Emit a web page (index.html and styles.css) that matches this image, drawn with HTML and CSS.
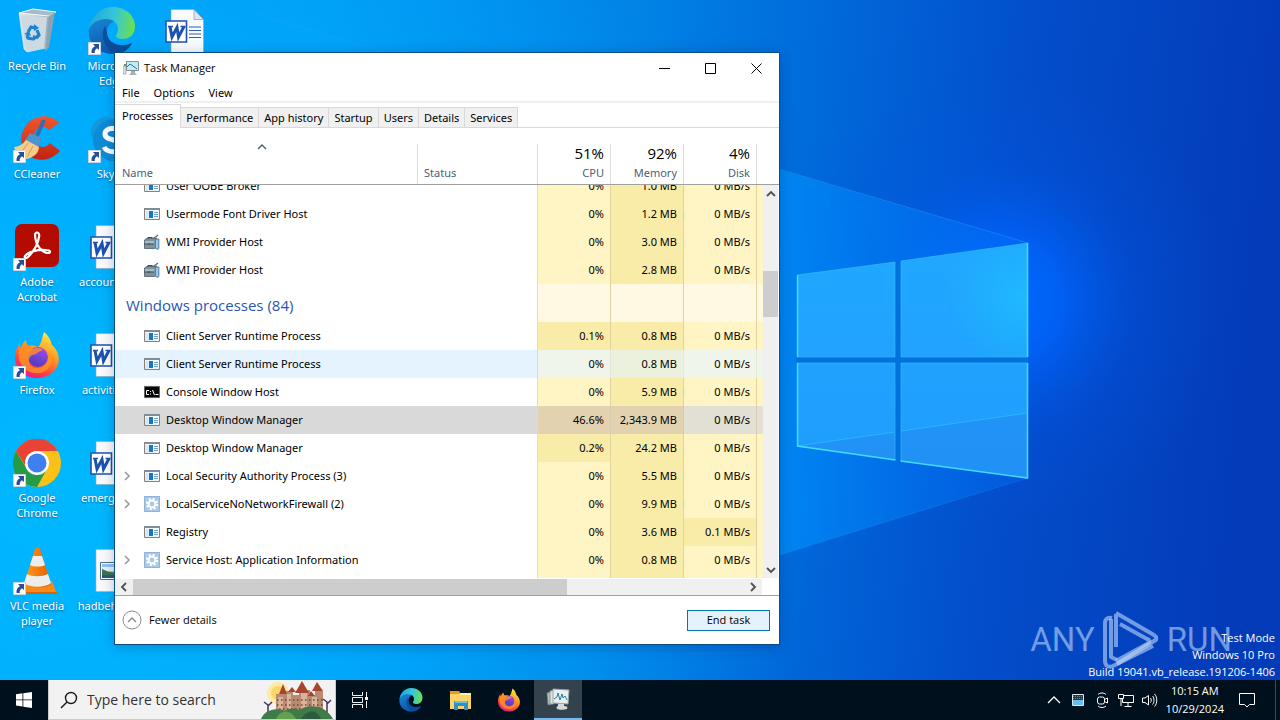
FILE: index.html
```html
<!DOCTYPE html>
<html lang="en">
<head>
<meta charset="utf-8">
<meta name="viewport" content="width=device-width, initial-scale=1">
<title>Task Manager</title>
<link rel="stylesheet" href="styles.css">
</head>
<body>
<svg class="defs" aria-hidden="true">
  <defs>
    <linearGradient id="edgeA" x1="0" y1="0.3" x2="1" y2="0.4"><stop offset="0" stop-color="#1fa7e0"/><stop offset="0.55" stop-color="#36c6d8"/><stop offset="1" stop-color="#6be04f"/></linearGradient>
    <linearGradient id="edgeB" x1="0" y1="0" x2="0.3" y2="1"><stop offset="0" stop-color="#1a94dc"/><stop offset="1" stop-color="#0c57b0"/></linearGradient>
    <linearGradient id="ffA" x1="0.8" y1="0" x2="0.3" y2="1"><stop offset="0" stop-color="#fff04a"/><stop offset="0.4" stop-color="#ffa022"/><stop offset="0.75" stop-color="#ff4340"/><stop offset="1" stop-color="#e3188a"/></linearGradient>
    <linearGradient id="ffB" x1="0.7" y1="0" x2="0.3" y2="1"><stop offset="0" stop-color="#a04bf0"/><stop offset="1" stop-color="#4a3bb8"/></linearGradient>
    <linearGradient id="ccA" x1="0" y1="0" x2="0" y2="1"><stop offset="0" stop-color="#f0562f"/><stop offset="1" stop-color="#c3230f"/></linearGradient>
    <linearGradient id="vlcA" x1="0" y1="0" x2="1" y2="0"><stop offset="0" stop-color="#ff9a1f"/><stop offset="1" stop-color="#e85e00"/></linearGradient>
    <linearGradient id="binA" x1="0" y1="0" x2="1" y2="0"><stop offset="0" stop-color="#dce6ec"/><stop offset="0.55" stop-color="#c3d2db"/><stop offset="1" stop-color="#93a7b4"/></linearGradient>
    <symbol id="i-arrow" viewBox="0 0 13 13"><path fill="#fdfdfd" stroke="#c9d6e2" d="M.5.5h12v12H.5z"/><path fill="#2a4f9a" d="M5 2h6v6L9 6.200C7 7.500 6.500 9 6.800 11H3.600C3 7.500 4.500 5.500 7 4.200z"/></symbol>
    <symbol id="i-edge" viewBox="0 0 48 48">
      <path fill="url(#edgeB)" d="M1 22C3 10 12 1 24 1c10 0 16 8 14 17-4-5-12-6-16-1-6 7-3 18 6 21 6 2 12 1 16-2-3 7-11 11-19 11C10 47-1 36 1 22z"/>
      <path fill="#0d4c9b" d="M17 19c-5 9-1 22 9 27 8 1 15-3 18-10-1 0-5 3-12 2-8-1-13-6-13-12z"/>
      <path fill="url(#edgeA)" d="M1 22C3 9 13 0 25 0c13 0 22 9 22 19 0 8-5 13-12 13-5 0-8-2-7-4 4-5 2-12-4-15C16 10 5 13 1 22z"/>
    </symbol>
    <symbol id="i-firefox" viewBox="0 0 48 48">
      <path fill="url(#ffA)" d="M31 1c6 5 7 10 8 13 6 5 9 14 5 22-4 7-11 11-20 11C11 47 2 38 2 26c0-6 2-10 5-14l0 5c2-3 3-6 6-8 0 3 1 5 3 6 3-1 7 0 9 1 4-4 4-10 6-15z"/>
      <circle cx="25" cy="26" r="10" fill="url(#ffB)"/>
      <path fill="#ff9323" d="M6 18c4-3 10-3 14 0 2-1 7-2 10 1-3 1-5 2-7 4-3 1-6 1-7 5-1 5 3 9 8 9 6 0 11-4 11-10 0-3-1-6-3-8 6 3 9 10 5 16-4 7-13 9-20 6C9 38 4 29 6 18z" opacity=".8"/>
    </symbol>
    <symbol id="i-word" viewBox="0 0 48 48">
      <path fill="#f9fafc" stroke="#8ea4b8" stroke-width=".6" d="M8 2.500h23l9.500 10v33H8z"/><path fill="#dfe5ec" stroke="#6f8aa2" stroke-width=".6" d="M31 2.500v10h9.500z"/>
      <path stroke="#2a5db8" stroke-width="1.200" d="M26 20h12M26 23.500h12M26 27h12M26 30.500h12"/>
      <path fill="#fff" stroke="#1c52b0" stroke-width="1.600" d="M3 14h20.500v21H3z"/>
      <path fill="none" stroke="#1c52b0" stroke-width="3" d="M7 19.500l2 10.500 5-9.500 1.500 9.500 5.500-10.500"/>
      <path stroke="#1c52b0" stroke-width="1.500" d="M5 19.500h5M17.500 19.500h5"/>
    </symbol>
    <symbol id="i-app" viewBox="0 0 16 16"><path fill="#f4f8fb" stroke="#8b8078" d="M.5 2.500h15v11H.5z"/><path fill="#7f8d9a" d="M0 2h16v2H0z"/><path fill="#d2e8f7" d="M1.500 5h3v8h-3z"/><path fill="#1877c0" d="M5 5h4v7H5z"/><path stroke="#6f9fc8" d="M10 6.500h4M10 8.500h4M10 10.500h4"/></symbol>
    <symbol id="i-wmi" viewBox="0 0 16 16"><path fill="#7c929e" stroke="#4c5d68" stroke-width=".8" d="M.5 6l3-2h9v9l-2 1.500H.5z"/><path fill="#a9bac3" d="M1 7h9v3H1z"/><path stroke="#3e4c55" fill="none" d="M4 5V3.500h4V5M0 10h10M5 9v2"/><path stroke="#5d7282" stroke-width="1.500" d="M9 5l5-4"/><path fill="#6fa8d4" stroke="#4a6c88" stroke-width=".6" d="M11.500 5h3.500v9.500l-1.500 1-2-1z"/><path stroke="#d6e6f0" d="M13 6v8"/></symbol>
    <symbol id="i-gear" viewBox="0 0 16 16"><path fill="#a9c9e6" d="M0 0h16v16H0z"/><path fill="none" stroke="#8fb4d8" d="M.5.5h15v15H.5z"/><circle cx="8" cy="8" r="5" fill="none" stroke="#fff" stroke-width="2.400" stroke-dasharray="2 1.930"/><circle cx="8" cy="8" r="3.400" fill="none" stroke="#fff" stroke-width="2"/></symbol>
    <symbol id="i-cmd" viewBox="0 0 16 16"><path fill="#050505" stroke="#777" stroke-width=".6" d="M.3 2.300h15.400v11.400H.3z"/><path fill="none" stroke="#fff" d="M5 6.500H2.500v4H5M6.500 7v1M6.500 9.500v1M8.500 6l2 5M11.500 10.500h3"/></symbol>
    <symbol id="i-right" viewBox="0 0 10 10"><path fill="none" stroke="currentColor" stroke-width="1.600" d="M3 1l4 4-4 4"/></symbol>
    <symbol id="i-up" viewBox="0 0 10 10"><path fill="none" stroke="currentColor" stroke-width="1.800" d="M1 7l4-4 4 4"/></symbol>
  </defs>
</svg>

<main class="desktop">
  <svg class="wallpaper" viewBox="0 0 1280 680" preserveAspectRatio="none" aria-hidden="true">
    <defs>
      <linearGradient id="bg" x1="0" y1="0" x2="1280" y2="120" gradientUnits="userSpaceOnUse"><stop offset="0" stop-color="#00a6fc"/><stop offset=".25" stop-color="#009cf4"/><stop offset=".5" stop-color="#0082e5"/><stop offset=".64" stop-color="#006adb"/><stop offset=".8" stop-color="#034ecb"/><stop offset="1" stop-color="#033bb9"/></linearGradient>
      <radialGradient id="left" cx="60" cy="480" r="760" gradientUnits="userSpaceOnUse"><stop offset="0" stop-color="#00b8ff"/><stop offset=".4" stop-color="#00b4ff" stop-opacity=".7"/><stop offset="1" stop-color="#00a8ff" stop-opacity="0"/></radialGradient>
      <radialGradient id="glow" cx="1000" cy="300" r="230" gradientUnits="userSpaceOnUse"><stop offset="0" stop-color="#006cff"/><stop offset=".25" stop-color="#0064fc" stop-opacity=".85"/><stop offset=".6" stop-color="#0058e6" stop-opacity=".25"/><stop offset="1" stop-color="#0055e0" stop-opacity="0"/></radialGradient>
      <linearGradient id="beam" x1="300" y1="0" x2="1028" y2="0" gradientUnits="userSpaceOnUse"><stop offset="0" stop-color="#00a8ff" stop-opacity=".2"/><stop offset=".65" stop-color="#0094ff" stop-opacity=".65"/><stop offset="1" stop-color="#0070f6" stop-opacity=".35"/></linearGradient>
      <linearGradient id="pane" x1="0" y1="0" x2="0" y2="1"><stop offset="0" stop-color="#21a8ff"/><stop offset="1" stop-color="#209cfe"/></linearGradient>
      <radialGradient id="spot" cx="1024" cy="298" r="80" gradientUnits="userSpaceOnUse"><stop offset="0" stop-color="#1fc0ff" stop-opacity=".75"/><stop offset="1" stop-color="#1fb8ff" stop-opacity="0"/></radialGradient>
    </defs>
    <path fill="url(#bg)" d="M0 0h1280v680H0z"/><path fill="url(#left)" d="M0 0h1280v680H0z"/>
    <path fill="url(#glow)" d="M760 60h480v480H760z"/>
    <path fill="url(#beam)" d="M300 28L1028 243v235L300 705z"/>
    <path stroke="#2ba4f5" stroke-opacity=".4" d="M250 12L1028 243"/><path stroke="#1a86ea" stroke-opacity=".3" d="M1028 478L600 608"/>
    <path fill="#0072dc" d="M796 275l232-32v235L796 446z"/>
    <g fill="url(#pane)"><path d="M797 275l98-13v95h-98zM901 261l127-18v114H901zM797 363h98v97l-98-14zM901 363h127v115l-127-17z"/></g>
    <path fill="url(#spot)" d="M901 261l127-18v114H901z"/>
    <path fill="#2186ee" fill-opacity=".5" d="M797 446l98-14v28zM901 431l127-18v65l-127-17z"/>
    <path stroke="#2bc0ff" stroke-opacity=".7" d="M797 446l98-14M901 431l127-18"/>
    <g fill="none" stroke="#37bfff"><path stroke-opacity=".6" d="M797 275l98-13v95h-98M901 261l127-18M901 261v96h127M797 363h98v97M901 363h127M901 363v98"/><path stroke="#3fdcff" stroke-width="1.600" d="M1027.500 243v114M1027.500 363v115l-127-17M797.500 275v82M797.500 363v83l98 14"/></g>
  </svg>

  <section class="shortcuts" aria-label="Desktop">
    <div class="shortcut"><svg class="shortcut-icon" viewBox="0 0 48 48"><path fill="url(#binA)" stroke="#e8f3fa" stroke-width=".6" d="M6 6l32 2-5 33-19 4-3-3z"/><path fill="#a7bac6" stroke="#f3f9fc" d="M6 6l14-4 23 3-7 4z"/><path fill="#8ba3b3" d="M36 9l6-4-6 35-4 5z"/><path fill="#cddae2" d="M8 9l26 1-3 31-18 3z"/><g fill="none" stroke="#1b83d0" stroke-width="3.200"><path d="M15 25l3-5 4 1M24 23l2 5-3 3M20 32l-5-1-1-3"/></g><path fill="#1b83d0" d="M21 17l5 4-5 3zM26 30l-6 4v-6zM11 27l5-3 2 5z"/></svg><span>Recycle Bin</span></div>
    <div class="shortcut"><svg class="shortcut-icon" viewBox="0 0 48 48"><use href="#i-edge"/><use href="#i-arrow" x="0" y="35" width="13" height="13"/></svg><span>Microsoft Edge</span></div>
    <div class="shortcut"><svg class="shortcut-icon" viewBox="0 0 48 48"><use href="#i-word"/></svg><span></span></div>

    <div class="shortcut"><svg class="shortcut-icon" viewBox="0 0 48 48"><path fill="url(#ccA)" d="M46 8C37-2 22 0 14 9 5 20 7 36 18 42c9 5 21 3 29-6l-10-8c-4 5-10 5-13 1-4-4-4-11 0-15 4-3 9-3 12 1z"/><path stroke="#2d6fb4" stroke-width="4" d="M31 5l-8 18"/><path fill="#4a95cf" d="M17 18l12 5-4 10-14-6z"/><path fill="#f4cd8d" d="M13 25l13 7c0 6-6 11-13 12C8 43 3 38 1 32c5 0 9-3 12-7z"/><path stroke="#d59a4e" d="M15 28l-7 10M20 31l-6 11"/><use href="#i-arrow" x="0" y="35" width="13" height="13"/></svg><span>CCleaner</span></div>
    <div class="shortcut"><svg class="shortcut-icon" viewBox="0 0 48 48"><circle cx="18" cy="17" r="15" fill="#1398dd"/><circle cx="26" cy="25" r="21" fill="#0c8bd6"/><path fill="none" stroke="#fff" stroke-width="5" d="M33 17c-3-5-16-5-16 2 0 8 17 4 17 12 0 8-15 7-18 1"/><use href="#i-arrow" x="0" y="35" width="13" height="13"/></svg><span>Skype</span></div>
    <div></div>

    <div class="shortcut"><svg class="shortcut-icon" viewBox="0 0 48 48"><rect x="2" y="1" width="44" height="43" rx="7" fill="#b30b00"/><path fill="none" stroke="#fff" stroke-width="2.200" d="M22 11c2-3 5-1 4 3-1 7-6 15-11 20-2 2-4 1-3-1 3-4 13-7 21-6 5 0 5 3 2 3-6 0-13-8-13-19z"/><use href="#i-arrow" x="0" y="35" width="13" height="13"/></svg><span>Adobe Acrobat</span></div>
    <div class="shortcut"><svg class="shortcut-icon" viewBox="0 0 48 48"><use href="#i-word"/></svg><span>accountin.rtf</span></div>
    <div></div>

    <div class="shortcut"><svg class="shortcut-icon" viewBox="0 0 48 48"><use href="#i-firefox"/><use href="#i-arrow" x="0" y="35" width="13" height="13"/></svg><span>Firefox</span></div>
    <div class="shortcut"><svg class="shortcut-icon" viewBox="0 0 48 48"><use href="#i-word"/></svg><span>activities.rtf</span></div>
    <div></div>

    <div class="shortcut"><svg class="shortcut-icon" viewBox="0 0 48 48"><circle cx="24" cy="24" r="24" fill="#fbc116"/><path fill="#259b48" d="M3 12a24 24 0 0 0 21 36l10-18-20 0z"/><path fill="#ea4335" d="M3 12A24 24 0 0 1 45 12H24c-5 0-9 3-11 8l-1 6z"/><circle cx="24" cy="24" r="12" fill="#fff"/><circle cx="24" cy="24" r="9.500" fill="#3f7ff0"/><use href="#i-arrow" x="0" y="35" width="13" height="13"/></svg><span>Google Chrome</span></div>
    <div class="shortcut"><svg class="shortcut-icon" viewBox="0 0 48 48"><use href="#i-word"/></svg><span>emergen.rtf</span></div>
    <div></div>

    <div class="shortcut"><svg class="shortcut-icon" viewBox="0 0 48 48"><path fill="#f58a1d" d="M10 34h29l5 13H7z"/><path fill="#d96400" d="M7 45h37v2H7z"/><path fill="url(#vlcA)" d="M22 2c1-2 4-2 5 0l11 35c-4 5-22 5-27 0z"/><path fill="#eeedeb" d="M20 9l9 0 3 9c-3 2-12 2-15 0zM14 27c5 3 15 3 21 0l3 9c-6 5-21 5-27 0z"/><use href="#i-arrow" x="0" y="35" width="13" height="13"/></svg><span>VLC media player</span></div>
    <div class="shortcut"><svg class="shortcut-icon" viewBox="0 0 48 48"><path fill="#f9fafc" stroke="#a9b6c2" stroke-width=".6" d="M8 2.500h33v42H8z"/><path fill="#fff" stroke="#4a6c94" d="M12.500 15.500h23v17h-23z"/><path fill="#8fc4f0" d="M14 17h20v14H14z"/><path fill="#e6f1f8" d="M14 20h20v4H14z"/><path fill="#3d7350" d="M14 22l7 3 13 1v2H14z"/><path fill="#2c5c78" d="M14 28h20v3H14z"/></svg><span>hadbehin.jpg</span></div>
  </section>

  <div class="brand" aria-label="ANY RUN">
    <span>ANY</span>
    <svg viewBox="0 0 56 60" width="56" height="60"><g fill="none" stroke="currentColor" stroke-width="4" stroke-linejoin="round"><path d="M9 8c-4-1-7 1-7 5v38c0 5 4 7 8 5l40-20"/><path d="M8 9v38l6 3"/><path d="M13 4v33M13 3l38 22M17 14l27 15c3 1 3 3 0 5L13 51"/><path d="M51 25c3 2 3 5 0 6L14 54"/></g></svg>
    <span>RUN</span>
  </div>
  <div class="build"><div>Test Mode</div><div>Windows 10 Pro</div><div>Build 19041.vb_release.191206-1406</div></div>

  <section class="window" aria-label="Task Manager">
    <header class="titlebar">
      <svg class="title-icon" viewBox="0 0 16 16"><path fill="#4f9d5c" d="M1 4h3v4H1z"/><path fill="#d9e0e4" stroke="#8d979d" stroke-width=".7" d="M0 6h3v8H0z"/><path fill="#c3ecf7" stroke="#7f9096" d="M3.500 1.500h12v9h-12z"/><path fill="none" stroke="#2873a3" d="M4 7l3-3 3 2 4 3"/><path fill="#a6b0b5" d="M8 11h4v2l2 2H6l2-2z"/></svg>
      <h1>Task Manager</h1>
      <button class="caption" aria-label="Minimize"><svg viewBox="0 0 11 11"><path stroke="#000" d="M0 5.500h11"/></svg></button>
      <button class="caption" aria-label="Maximize"><svg viewBox="0 0 11 11"><path fill="none" stroke="#000" d="M.5.5h10v10H.5z"/></svg></button>
      <button class="caption" aria-label="Close"><svg viewBox="0 0 11 11"><path stroke="#000" d="M.5.5l10 10M10.500.5l-10 10"/></svg></button>
    </header>
    <nav class="menubar"><button>File</button><button>Options</button><button>View</button></nav>
    <div class="tabs" role="tablist">
      <button role="tab" class="tab active" aria-selected="true">Processes</button><button role="tab" class="tab">Performance</button><button role="tab" class="tab">App history</button><button role="tab" class="tab">Startup</button><button role="tab" class="tab">Users</button><button role="tab" class="tab">Details</button><button role="tab" class="tab">Services</button>
    </div>
    <div class="head-wrap">
      <table class="grid head">
        <colgroup><col><col class="c-status"><col class="c-num"><col class="c-num"><col class="c-num"><col class="c-end"></colgroup>
        <tr>
          <th class="h-name"><svg class="sort" viewBox="0 2 10 6"><path fill="none" stroke="currentColor" stroke-width="1.500" d="M1 7l4-4 4 4"/></svg>Name</th>
          <th>Status</th>
          <th class="num"><b>51%</b>CPU</th>
          <th class="num"><b>92%</b>Memory</th>
          <th class="num"><b>4%</b>Disk</th>
          <th class="end"></th>
        </tr>
      </table>
    </div>
    <div class="list">
      <div class="list-view">
        <table class="grid body">
          <colgroup><col><col class="c-status"><col class="c-num"><col class="c-num"><col class="c-num"><col class="c-end"></colgroup>
          <tr><td><div class="name"><svg class="ico"><use href="#i-app"/></svg>User OOBE Broker</div></td><td></td><td class="num">0%</td><td class="num mid">1.0 MB</td><td class="num">0 MB/s</td><td class="end"></td></tr>
          <tr><td><div class="name"><svg class="ico"><use href="#i-app"/></svg>Usermode Font Driver Host</div></td><td></td><td class="num">0%</td><td class="num mid">1.2 MB</td><td class="num">0 MB/s</td><td class="end"></td></tr>
          <tr><td><div class="name"><svg class="ico"><use href="#i-wmi"/></svg>WMI Provider Host</div></td><td></td><td class="num">0%</td><td class="num mid">3.0 MB</td><td class="num">0 MB/s</td><td class="end"></td></tr>
          <tr><td><div class="name"><svg class="ico"><use href="#i-wmi"/></svg>WMI Provider Host</div></td><td></td><td class="num">0%</td><td class="num mid">2.8 MB</td><td class="num">0 MB/s</td><td class="end"></td></tr>
          <tr class="group"><td>Windows processes (84)</td><td></td><td class="num"></td><td class="num"></td><td class="num"></td><td class="end"></td></tr>
          <tr><td><div class="name"><svg class="ico"><use href="#i-app"/></svg>Client Server Runtime Process</div></td><td></td><td class="num mid">0.1%</td><td class="num mid">0.8 MB</td><td class="num">0 MB/s</td><td class="end"></td></tr>
          <tr class="hovered"><td><div class="name"><svg class="ico"><use href="#i-app"/></svg>Client Server Runtime Process</div></td><td></td><td class="num">0%</td><td class="num mid">0.8 MB</td><td class="num">0 MB/s</td><td class="end"></td></tr>
          <tr><td><div class="name"><svg class="ico"><use href="#i-cmd"/></svg>Console Window Host</div></td><td></td><td class="num">0%</td><td class="num mid">5.9 MB</td><td class="num">0 MB/s</td><td class="end"></td></tr>
          <tr class="selected"><td><div class="name"><svg class="ico"><use href="#i-app"/></svg>Desktop Window Manager</div></td><td></td><td class="num high">46.6%</td><td class="num high">2,343.9 MB</td><td class="num">0 MB/s</td><td class="end"></td></tr>
          <tr><td><div class="name"><svg class="ico"><use href="#i-app"/></svg>Desktop Window Manager</div></td><td></td><td class="num mid">0.2%</td><td class="num mid">24.2 MB</td><td class="num">0 MB/s</td><td class="end"></td></tr>
          <tr><td><div class="name expandable"><svg class="chev"><use href="#i-right"/></svg><svg class="ico"><use href="#i-app"/></svg>Local Security Authority Process (3)</div></td><td></td><td class="num">0%</td><td class="num mid">5.5 MB</td><td class="num">0 MB/s</td><td class="end"></td></tr>
          <tr><td><div class="name expandable"><svg class="chev"><use href="#i-right"/></svg><svg class="ico"><use href="#i-gear"/></svg>LocalServiceNoNetworkFirewall (2)</div></td><td></td><td class="num">0%</td><td class="num mid">9.9 MB</td><td class="num">0 MB/s</td><td class="end"></td></tr>
          <tr><td><div class="name"><svg class="ico"><use href="#i-app"/></svg>Registry</div></td><td></td><td class="num">0%</td><td class="num mid">3.6 MB</td><td class="num mid">0.1 MB/s</td><td class="end"></td></tr>
          <tr><td><div class="name expandable"><svg class="chev"><use href="#i-right"/></svg><svg class="ico"><use href="#i-gear"/></svg>Service Host: Application Information</div></td><td></td><td class="num">0%</td><td class="num mid">0.8 MB</td><td class="num">0 MB/s</td><td class="end"></td></tr>
          <tr><td></td><td></td><td class="num"></td><td class="num mid"></td><td class="num"></td><td class="end"></td></tr>
        </table>
      </div>
      <div class="vbar"><svg class="bar-arrow"><use href="#i-up"/></svg><div class="vtrack"><div class="vthumb"></div></div><svg class="bar-arrow flip"><use href="#i-up"/></svg></div>
    </div>
    <div class="hbar"><svg class="bar-arrow left"><use href="#i-up"/></svg><div class="htrack"><div class="hthumb"></div></div><svg class="bar-arrow right"><use href="#i-up"/></svg></div>
    <footer class="footer">
      <button class="fewer"><svg viewBox="0 0 20 20"><circle cx="10" cy="10" r="9" fill="none" stroke="#8a8a8a"/><path fill="none" stroke="#8a8a8a" stroke-width="1.400" d="M6 12l4-4 4 4"/></svg>Fewer details</button>
      <button class="end-task">End task</button>
    </footer>
  </section>
</main>

<footer class="taskbar">
  <button class="task start" aria-label="Start"><svg viewBox="0 0 16 16" width="16" height="16"><path fill="#fff" d="M0 2.200l6.500-.9v6.200H0zM7.300 1.200L16 0v7.500H7.300zM0 8.300h6.500v6.200L0 13.600zM7.300 8.300H16V16l-8.700-1.200z"/></svg></button>
  <label class="search">
    <svg viewBox="0 0 18 18" width="18" height="18"><g fill="none" stroke="#1a1a1a" stroke-width="1.400"><circle cx="11" cy="7" r="5.500"/><path d="M7 11l-6 6"/></g></svg>
    <input type="text" placeholder="Type here to search" aria-label="Type here to search">
    <svg class="castle" viewBox="0 0 74 39" width="74" height="39"><circle cx="17" cy="13" r="11" fill="#fde9a8"/><circle cx="17" cy="13" r="7" fill="#fbd76a"/><path fill="#b98a72" d="M15 14h9v-3h8v4h6v-5h11v5h5v-4h8v22H15z"/><path fill="#d9b49a" d="M17 17h5v12h-5zM26 14h4v15h-4zM40 13h6v16h-6zM51 17h5v12h-5z"/><path fill="#a8452c" d="M18 14l4-10 4 10zM34 13l7-12 7 12zM51 11l5-9 6 9zM27 12l4-5 4 5zM47 16l3-5 4 5z"/><path stroke="#6d4637" stroke-width="1.500" stroke-dasharray="1.500 2.500" d="M16 20h46M16 25h46M18 29h42"/><path stroke="#40355f" stroke-width="1.500" fill="none" d="M7 34v-9l-4-3M7 26l4-4M66 34V22l-4-3M66 24l4-4"/><path fill="#3f7a48" d="M0 39c4-9 14-12 24-8 4-3 10-3 14-1 9-6 26-6 34 9z"/><path fill="#63a051" d="M15 39c4-9 15-10 20 0z"/><path fill="#2b5c3e" d="M40 39c6-10 16-10 20 0z"/></svg>
  </label>
  <button class="task" aria-label="Task View"><svg viewBox="0 0 16 16" width="16" height="16"><path fill="none" stroke="#f2f2f2" d="M.5 0v3.500h10V0M.5 5.500h10v5H.5zM.5 16v-3.500h10V16M14.500 0v5M14.500 9v7"/><path fill="#fff" d="M13 5h3v3h-3z"/></svg></button>
  <div class="apps">
    <button class="task" aria-label="Microsoft Edge"><svg width="24" height="24"><use href="#i-edge"/></svg></button>
    <button class="task" aria-label="File Explorer"><svg viewBox="0 0 24 24" width="24" height="24"><path fill="#e79b1e" d="M2 3h9l2 3v3H2z"/><path fill="#fbd463" d="M2 6h21v15H2z"/><path fill="#fff0a8" d="M12 5h11v2H12z"/><path fill="#2f8fc8" d="M6 13h14v9h-4v-4h-6v4H6z"/><path fill="#6cc1ea" d="M7 13h12v2H7z"/></svg></button>
    <button class="task" aria-label="Firefox"><svg width="24" height="24"><use href="#i-firefox"/></svg></button>
    <button class="task running" aria-label="Task Manager"><svg viewBox="0 0 24 24" width="24" height="24"><path fill="#b9c0bf" stroke="#6e7877" stroke-width=".6" d="M1 6l6-2v13l-5 1z"/><path fill="#dfe3e1" stroke="#7b8583" stroke-width=".8" d="M4 4l4-1v14H4z"/><path fill="#e9eeee" stroke="#9aa5a6" d="M7 2l16 1-1 14-15-1z"/><path fill="none" stroke="#2b7aa6" d="M8 12l3-2 1-4 2 7 2-6 1 4 2-2 2 4"/><path fill="#d5d9d8" d="M12 17h6v2c3 0 4 1 3 3-3 1-8 1-10 0-1-2 0-3 1-3z"/></svg></button>
  </div>
  <div class="tray">
    <svg viewBox="0 0 16 16"><path fill="none" stroke="#fff" stroke-width="1.300" d="M2 11l6-6 6 6"/></svg>
    <svg viewBox="0 0 16 16"><path fill="#263742" stroke="#dfe9ee" d="M2.500 2.500h11v11h-11z"/><path stroke="#6f8692" stroke-dasharray="1 1" d="M3 4.500h10M3 6.500h10"/><path fill="#66bdf0" d="M3 8h10v5H3z"/></svg>
    <svg viewBox="0 0 16 16"><g fill="none" stroke="#fff"><rect x="3.500" y="5" width="7" height="7" rx="2"/><path d="M10.500 7.500l3-1.500v5l-3-1.500M4 2.500C6 .5 10 .5 12 2.500M4 14c2 2 6 2 8 0"/></g></svg>
    <svg viewBox="0 0 16 16"><g fill="none" stroke="#fff"><path d="M4.500 3.500h11v7h-11zM10 11v3M6.500 14.500h7"/><path fill="#00101c" d="M.5 2.500h5v4h-5zM3 7v7"/></g></svg>
    <svg viewBox="0 0 16 16"><g fill="none" stroke="#fff"><path d="M.5 6v4.500H3L6.500 13V3.500L3 6zM8.500 6c1 1 1 3.500 0 4.500M10.500 4c2 2 2 6.500 0 8.500M12.500 2c3 3 3 9.500 0 12.500"/></g></svg>
    <div class="clock"><div>10:15 AM</div><div>10/29/2024</div></div>
    <svg class="notice" viewBox="0 0 16 16"><path fill="none" stroke="#fff" d="M.5 1.500h15v11h-5L8 15l-2.500-2.500h-5z"/></svg>
  </div>
</footer>
</body>
</html>
```

FILE: styles.css
```css
* { box-sizing: border-box; }

body {
  --ui: "Noto Sans", "Open Sans", sans-serif;
  --alt: "Open Sans", "Noto Sans", sans-serif;
  margin: 0;
  height: 100vh;
  display: flex;
  flex-direction: column;
  overflow: hidden;
  font: 11px/16px var(--ui);
  color: #000;
}

button, input { font: inherit; color: inherit; border: 0; padding: 0; margin: 0; background: none; }
svg { display: block; flex: none; }
.defs { position: absolute; width: 0; height: 0; }

/* Desktop */
.desktop { position: relative; flex: 1; min-height: 0; overflow: hidden; background: #0090f0; }
.wallpaper { position: absolute; inset: 0; width: 100%; height: 100%; }

.shortcuts {
  position: relative;
  display: grid;
  grid-template-columns: repeat(3, 74px);
  grid-auto-rows: 108px;
  column-gap: 1px;
  padding-top: 7px;
}
.shortcut {
  display: flex;
  flex-direction: column;
  align-items: center;
  gap: 3px;
  color: #fff;
  line-height: 15px;
  text-align: center;
  text-shadow: 0 1px 2px rgba(0, 40, 90, .6);
}
.shortcut span { max-width: 74px; }
.shortcut-icon { width: 48px; height: 48px; }

.brand {
  position: absolute;
  right: 48px;
  bottom: 10px;
  display: flex;
  align-items: center;
  gap: 8px;
  color: rgba(190, 215, 250, .6);
  font: 33px/60px "Roboto", sans-serif;
}
.build {
  position: absolute;
  right: 5px;
  bottom: 0;
  color: #fff;
  font-family: var(--alt);
  line-height: 17px;
  text-align: right;
}

/* Window */
.window {
  position: absolute;
  top: 52px;
  right: 500px;
  bottom: 35px;
  left: 114px;
  display: flex;
  flex-direction: column;
  background: #fff;
  border: 1px solid #0b4c82;
  box-shadow: 0 2px 12px rgba(0, 20, 60, .25);
}
.titlebar { display: flex; align-items: center; height: 30px; padding-left: 8px; }
.title-icon { width: 16px; height: 16px; }
.titlebar h1 { flex: 1; margin: 0 0 0 5px; font-family: var(--alt); font-size: 11px; font-weight: 400; }
.caption { width: 46px; height: 28px; display: grid; place-items: center; }
.caption svg { width: 11px; height: 11px; }

.menubar { display: flex; gap: 14px; height: 20px; padding: 2px 7px 0; border-bottom: 2px solid #f0f0f0; }

.tabs { display: flex; align-items: flex-end; height: 25px; border-bottom: 1px solid #d9d9d9; }
.tab { height: 20px; padding: 0 5px; background: #f0f0f0; border: 1px solid #d9d9d9; border-left: 0; border-bottom: 0; }
.tab.active { height: 24px; margin-bottom: -1px; padding: 0 7px 2px; background: #fff; }

.grid { width: 100%; border-collapse: separate; border-spacing: 0; table-layout: fixed; }
.grid th, .grid td { padding: 0; white-space: nowrap; font-weight: 400; text-align: left; }
.c-status { width: 120px; }
.c-num { width: 73px; }
.c-end { width: 6px; }

.head-wrap { padding: 16px 16px 0 0; border-bottom: 1px solid #a0a0a0; }
.grid.head th { height: 40px; padding: 0 6px 3px; vertical-align: bottom; color: #4c607a; border-right: 1px solid #dcdcdc; }
.grid.head .h-name { padding-left: 7px; }
.grid.head .end { padding: 0; border: 0; }
.grid.head .num { text-align: right; }
.head b { display: block; margin-bottom: 3px; color: #000; font: 15px/18px var(--alt); }
.sort { width: 10px; height: 6px; margin: 0 0 15px 135px; color: #56657a; }

.list { flex: 1; min-height: 0; display: flex; }
.list-view { flex: 1; overflow: hidden; }
.body { margin-top: -13px; }
.grid.body td { height: 28px; }
.grid.body .num { padding-right: 6px; text-align: right; background: #fff4c4; border-right: 1px solid #e0d3a0; }
.body td:nth-child(2) { border-right: 1px solid #e6dcb4; }
.body .end { background: #fff4c4; }
.grid.body .mid { background: #f9eca8; }
.name { display: flex; align-items: center; gap: 6px; padding-left: 29px; }
.name.expandable { padding-left: 7px; }
.ico { width: 16px; height: 16px; }
.chev { width: 10px; height: 10px; margin-right: 6px; color: #999; }

.grid.body .group td { height: 38px; padding-top: 3px; }
.grid.body .group td:first-child { padding-left: 11px; font: 15px/20px var(--alt); color: #2a56b4; }
.grid.body .group .num, .group .end { background: #fff9e4; }

.hovered td { background: #e5f3ff; }
.grid.body .hovered .num, .hovered .end { background: #f0f5ec; border-right-color: #e2ead8; }
.grid.body .hovered .mid { background: #ebf1dc; }
.selected td { background: #d9d9d9; }
.grid.body .selected .num, .selected .end { background: #e2e0d4; border-right-color: #d6ccb2; }
.grid.body .selected .high { background: #e3d2b0; }

.vbar { width: 16px; display: flex; flex-direction: column; align-items: center; padding: 4px 1px 3px 0; background: linear-gradient(to right, #f0f0f0 15px, #fff 15px); }
.vtrack { flex: 1; width: 100%; padding-top: 72px; }
.vthumb { height: 46px; background: #cdcdcd; }
.bar-arrow { width: 10px; height: 10px; color: #505050; }
.flip { transform: rotate(180deg); }
.left { transform: rotate(-90deg); }
.right { transform: rotate(90deg); }
.hbar { height: 17px; margin-right: 17px; display: flex; align-items: center; padding: 0 4px; background: #f0f0f0; border-top: 1px solid #fff; }
.htrack { flex: 1; height: 100%; padding: 0 4px; }
.hthumb { width: 71%; height: 100%; background: #cdcdcd; }

.footer { display: flex; align-items: center; justify-content: space-between; height: 49px; padding: 0 9px 0 7px; border-top: 1px solid #a0a0a0; }
.fewer { display: flex; align-items: center; gap: 7px; font-family: var(--alt); }
.fewer svg { width: 20px; height: 20px; }
.end-task { width: 83px; height: 21px; background: #e5f1fb; border: 1px solid #0078a7; font-family: var(--alt); }

/* Taskbar */
.taskbar { display: flex; height: 40px; background: #00101c; color: #fff; font-family: var(--alt); }
.task { width: 48px; display: grid; place-items: center; }
.search { width: 288px; display: flex; align-items: center; gap: 9px; padding-left: 11px; background: #f2f2f2; border: 1px solid #c8ccd0; border-top: 0; color: #1a1a1a; }
.search input { flex: 1; min-width: 0; font-size: 14px; line-height: 20px; }
.search input::placeholder { color: #333; opacity: 1; }
.castle { align-self: flex-end; }
.apps { display: flex; gap: 1px; padding-left: 3px; }
.running { background: #33424d; border-bottom: 2px solid #76b9ed; }
.tray { margin: 0 4px 0 auto; display: flex; align-items: center; gap: 8px; padding-right: 20px; border-right: 1px solid #3c4a54; }
.tray svg { width: 16px; height: 16px; }
.tray .clock { line-height: 18px; text-align: center; }
.tray .notice { margin-left: 7px; }
```
